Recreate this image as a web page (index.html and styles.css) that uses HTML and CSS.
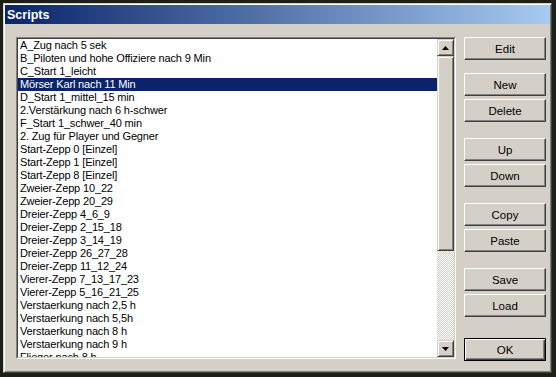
FILE: index.html
```html
<!DOCTYPE html>
<html>
<head>
	<meta charset="utf-8">
	<title>Scripts</title>
	<link rel="stylesheet" href="styles.css">
</head>
<body>
	<div class="window">
		<div class="titleBar">Scripts</div>
		<div class="dialogBody">
			<div class="listBox">
				<div class="listInner">
					<ul class="scriptList">
						<li>A_Zug nach 5 sek</li>
						<li>B_Piloten und hohe Offiziere nach 9 Min</li>
						<li>C_Start 1_leicht</li>
						<li class="selected">Mörser Karl nach 11 Min</li>
						<li>D_Start 1_mittel_15 min</li>
						<li>2.Verstärkung nach 6 h-schwer</li>
						<li>F_Start 1_schwer_40 min</li>
						<li>2. Zug für Player und Gegner</li>
						<li>Start-Zepp 0 [Einzel]</li>
						<li>Start-Zepp 1 [Einzel]</li>
						<li>Start-Zepp 8 [Einzel]</li>
						<li>Zweier-Zepp 10_22</li>
						<li>Zweier-Zepp 20_29</li>
						<li>Dreier-Zepp 4_6_9</li>
						<li>Dreier-Zepp 2_15_18</li>
						<li>Dreier-Zepp 3_14_19</li>
						<li>Dreier-Zepp 26_27_28</li>
						<li>Dreier-Zepp 11_12_24</li>
						<li>Vierer-Zepp 7_13_17_23</li>
						<li>Vierer-Zepp 5_16_21_25</li>
						<li>Verstaerkung nach 2,5 h</li>
						<li>Verstaerkung nach 5,5h</li>
						<li>Verstaerkung nach 8 h</li>
						<li>Verstaerkung nach 9 h</li>
						<li>Flieger nach 8 h</li>
					</ul>
					<div class="scrollBar">
						<div class="scrollButton">
							<svg width="7" height="4" viewBox="0 0 7 4"><path d="M3.5 0L7 4H0z"/></svg>
						</div>
						<div class="scrollThumb"></div>
						<div class="scrollTrack"></div>
						<div class="scrollButton">
							<svg width="7" height="4" viewBox="0 0 7 4"><path d="M0 0H7L3.5 4z"/></svg>
						</div>
					</div>
				</div>
			</div>

			<div class="buttonColumn">
				<button class="dlgButton">Edit</button>
				<button class="dlgButton firstGroup">New</button>
				<button class="dlgButton">Delete</button>
				<button class="dlgButton groupStart">Up</button>
				<button class="dlgButton">Down</button>
				<button class="dlgButton groupStart">Copy</button>
				<button class="dlgButton">Paste</button>
				<button class="dlgButton groupStart">Save</button>
				<button class="dlgButton">Load</button>
				<button class="dlgButton defaultButton">OK</button>
			</div>
		</div>
	</div>
</body>
</html>
```

FILE: styles.css
```css
html {
	background-color: #1d2016;
}

body {
	margin: 0;
	padding: 3px 4px 4px 3px;
	font-family: "Liberation Sans", Arial, sans-serif;
	font-size: 11px;
}

.window {
	width: 545px;
	height: 366px;
	background-color: #d4d0c8;
	border: 1px solid;
	border-color: #d4d0c8 #404040 #404040 #d4d0c8;
	box-shadow: inset 1px 1px #ffffff, inset -1px -1px #808080;
	padding: 1px;
	display: flex;
	flex-direction: column;
}

.titleBar {
	height: 19px;
	line-height: 20px;
	padding-left: 2px;
	background: linear-gradient(to right, #0a246a, #a6caf0);
	color: white;
	font-weight: bold;
	font-size: 12.5px;
}

.dialogBody {
	display: flex;
	gap: 8px;
	padding: 13px 4px 0 11px;
}

.listBox {
	width: 438px;
	height: 320px;
	border: 1px solid;
	border-color: #808080 #ffffff #ffffff #808080;
}

.listInner {
	height: 318px;
	border: 1px solid;
	border-color: #404040 #d4d0c8 #d4d0c8 #404040;
	background-color: white;
	display: flex;
}

.scriptList {
	flex: 1;
	list-style: none;
	margin: 0;
	padding: 0;
	overflow: hidden;
}

.scriptList li {
	height: 13px;
	line-height: 13px;
	padding-left: 2px;
	letter-spacing: -0.15px;
	white-space: nowrap;
	color: black;
}

.scriptList li.selected {
	background-color: #0a246a;
	color: white;
}

.scrollBar {
	width: 17px;
	display: flex;
	flex-direction: column;
}

.scrollButton,
.scrollThumb {
	box-sizing: border-box;
	background-color: #d4d0c8;
	border: 1px solid;
	border-color: #d4d0c8 #404040 #404040 #d4d0c8;
	box-shadow: inset 1px 1px #ffffff, inset -1px -1px #808080;
}

.scrollButton {
	height: 17px;
	display: flex;
	align-items: center;
	justify-content: center;
}

.scrollThumb {
	height: 195px;
}

.scrollTrack {
	flex: 1;
	background: repeating-conic-gradient(#d4d0c8 0 25%, #ffffff 0 50%) 0 0 / 2px 2px;
}

.buttonColumn {
	display: flex;
	flex-direction: column;
	gap: 3px;
}

.dlgButton {
	box-sizing: border-box;
	width: 82px;
	height: 23px;
	margin: 0;
	padding: 0;
	font-family: "Liberation Sans", Arial, sans-serif;
	font-size: 11.5px;
	color: black;
	background-color: #d4d0c8;
	border: 1px solid;
	border-color: #ffffff #404040 #404040 #ffffff;
	box-shadow: inset -1px -1px #808080;
}

.firstGroup {
	margin-top: 10px;
}

.groupStart {
	margin-top: 13px;
}

.defaultButton {
	margin-top: 18px;
	border-color: black;
	box-shadow: inset 1px 1px #ffffff, inset -1px -1px #404040, inset -2px -2px #808080;
}
```
